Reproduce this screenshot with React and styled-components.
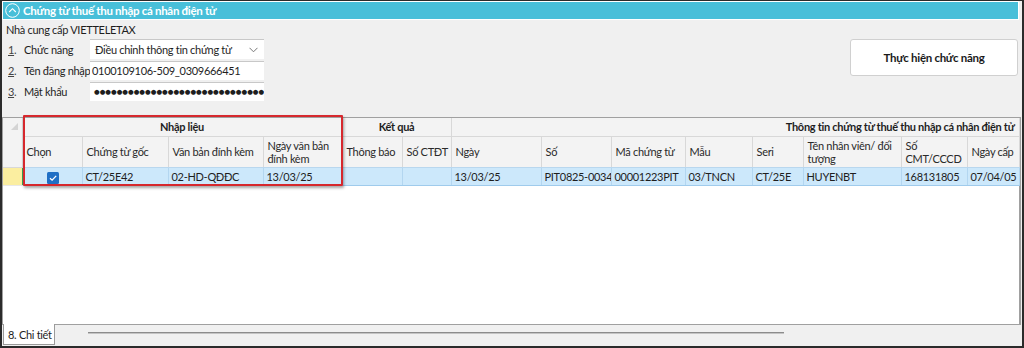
import React from "react";
import styled, { createGlobalStyle } from "styled-components";

const GlobalStyle = createGlobalStyle`
  html, body {
    margin: 0;
    padding: 0;
    background: #f0f0f0;
  }
  * {
    box-sizing: border-box;
  }
`;

const columns = [
  { key: "chon", title: "Chọn", width: 60 },
  { key: "goc", title: "Chứng từ gốc", width: 86 },
  { key: "vb", title: "Văn bản đính kèm", width: 95 },
  { key: "ngayvb", title: "Ngày văn bản đính kèm", width: 79 },
  { key: "tb", title: "Thông báo", width: 60 },
  { key: "ctdt", title: "Số CTĐT", width: 49 },
  { key: "ngay", title: "Ngày", width: 90 },
  { key: "so", title: "Số", width: 70 },
  { key: "ma", title: "Mã chứng từ", width: 74 },
  { key: "mau", title: "Mẫu", width: 67 },
  { key: "seri", title: "Seri", width: 51 },
  { key: "ten", title: "Tên nhân viên/ đối tượng", width: 98 },
  { key: "cmt", title: "Số CMT/CCCD", width: 66 },
  { key: "ngaycap", title: "Ngày cấp", width: 52 },
];

const row = {
  chon: true,
  goc: "CT/25E42",
  vb: "02-HD-QĐĐC",
  ngayvb: "13/03/25",
  tb: "",
  ctdt: "",
  ngay: "13/03/25",
  so: "PIT0825-0034",
  ma: "00001223PIT",
  mau: "03/TNCN",
  seri: "CT/25E",
  ten: "HUYENBT",
  cmt: "168131805",
  ngaycap: "07/04/05",
};

const fields = [
  { n: "1", label: "Chức năng", value: "Điều chỉnh thông tin chứng từ", select: true },
  { n: "2", label: "Tên đăng nhập", value: "0100109106-509_0309666451" },
  { n: "3", label: "Mật khẩu", value: "●".repeat(34), secret: true },
];

const CollapseIcon = () => (
  <svg width="15" height="15" viewBox="0 0 15 15">
    <circle cx="7.5" cy="7.5" r="6.8" fill="none" stroke="#fff" strokeWidth="1" />
    <path d="M4.2 9 L7.5 5.7 L10.8 9" fill="none" stroke="#fff" strokeWidth="1.1" />
  </svg>
);

const Chevron = () => (
  <svg width="9" height="6" viewBox="0 0 9 6">
    <path d="M0.5 0.8 L4.5 4.8 L8.5 0.8" fill="none" stroke="#777" strokeWidth="1" />
  </svg>
);

const Check = () => (
  <svg width="12" height="12" viewBox="0 0 12 12">
    <rect x="0" y="0" width="12" height="12" rx="1.5" fill="#1f6fc5" />
    <path d="M3 6.2 L5.1 8.2 L9.2 3.9" fill="none" stroke="#fff" strokeWidth="1.3" />
  </svg>
);

const App = () => {
  return (
    <Frame>
      <GlobalStyle />
      <TitleBar>
        <CollapseIcon />
        <span>Chứng từ thuế thu nhập cá nhân điện tử</span>
      </TitleBar>

      <TopPanel>
        <Form>
          <Provider>Nhà cung cấp VIETTELETAX</Provider>
          {fields.map((f) => (
            <FieldRow key={f.n}>
              <Label>
                <Num>
                  <u>{f.n}</u>.
                </Num>
                {f.label}
              </Label>
              <Input $select={f.select} $secret={f.secret}>
                <span>{f.value}</span>
                {f.select && <Chevron />}
              </Input>
            </FieldRow>
          ))}
        </Form>
        <ActionButton>Thực hiện chức năng</ActionButton>
      </TopPanel>

      <GridBox>
        <Table>
          <colgroup>
            <col style={{ width: 19 }} />
            {columns.map((c) => (
              <col key={c.key} style={{ width: c.width }} />
            ))}
          </colgroup>
          <thead>
            <tr>
              <Corner rowSpan={2}>
                <CornerMark />
              </Corner>
              <GroupCell colSpan={4}>Nhập liệu</GroupCell>
              <GroupCell colSpan={2}>Kết quả</GroupCell>
              <GroupCell colSpan={8} $right>
                Thông tin chứng từ thuế thu nhập cá nhân điện tử
              </GroupCell>
            </tr>
            <tr>
              {columns.map((c) => (
                <HeadCell key={c.key}>{c.title}</HeadCell>
              ))}
            </tr>
          </thead>
          <tbody>
            <tr>
              <Indicator />
              {columns.map((c) => (
                <DataCell key={c.key} $center={c.key === "chon"} $first={c.key === "chon"}>
                  {c.key === "chon" ? <Check /> : row[c.key]}
                </DataCell>
              ))}
            </tr>
          </tbody>
        </Table>
        <Highlight />
      </GridBox>

      <BottomBar>
        <Tab>8. Chi tiết</Tab>
        <ScrollLine />
      </BottomBar>
    </Frame>
  );
};

const Frame = styled.div`
  width: 1024px;
  height: 348px;
  display: flex;
  flex-direction: column;
  background: #f0f0f0;
  border: 2px solid #2b2b2b;
  border-top-width: 1px;
  font-family: Lato, "Noto Sans", sans-serif;
  font-size: 11px;
  letter-spacing: -0.3px;
  color: #1e1e1e;
  overflow: hidden;
`;

const TitleBar = styled.div`
  height: 19px;
  flex-shrink: 0;
  margin-right: 3px;
  display: flex;
  align-items: center;
  gap: 3px;
  padding-left: 2px;
  background: #48bfd9;
  border: 1px solid #fff;
  color: #fff;
  font-weight: 700;
  font-size: 11.5px;
`;

const TopPanel = styled.div`
  height: 97px;
  flex-shrink: 0;
  display: flex;
  justify-content: space-between;
  align-items: flex-start;
  padding: 1px 4px 0 4px;
`;

const Form = styled.div`
  display: flex;
  flex-direction: column;
  gap: 1px;
`;

const Provider = styled.div`
  height: 17px;
  line-height: 17px;
`;

const FieldRow = styled.div`
  display: flex;
  align-items: center;
  height: 20px;
`;

const Label = styled.div`
  width: 84px;
  padding-left: 2px;
  white-space: nowrap;
`;

const Num = styled.span`
  display: inline-block;
  width: 16px;
  color: #444;
`;

const Input = styled.div`
  width: 174px;
  height: ${(p) => (p.$select ? 20 : 19)}px;
  display: flex;
  align-items: center;
  justify-content: space-between;
  padding: 0 6px 0 ${(p) => (p.$select ? 5 : p.$secret ? 4 : 2)}px;
  background: #fff;
  border-top: 1px solid #c8c8c8;
  overflow: hidden;
  white-space: nowrap;
  span {
    font-family: ${(p) => (p.$secret ? '"DejaVu Sans", sans-serif' : "inherit")};
    font-size: ${(p) => (p.$secret ? 6.5 : 11)}px;
    letter-spacing: ${(p) => (p.$secret ? "0" : "-0.3px")};
  }
`;

const ActionButton = styled.button`
  margin-top: 18px;
  width: 168px;
  height: 37px;
  background: #fff;
  border: 1px solid #d0d0d0;
  border-radius: 3px;
  font-family: inherit;
  font-size: 11.5px;
  letter-spacing: -0.3px;
  font-weight: 700;
  color: #1a1a1a;
`;

const GridBox = styled.div`
  position: relative;
  height: 208px;
  flex-shrink: 0;
  margin-right: 1px;
  background: #fff;
  border: 1px solid #a0a0a0;
  border-right-width: 2px;
  overflow: visible;
`;

const Table = styled.table`
  table-layout: fixed;
  border-collapse: collapse;
  width: 1016px;
  font-size: 11px;
`;

const Corner = styled.th`
  padding: 0;
  background: #f3f3f3;
  border-right: 1px solid #d8d8d8;
  border-bottom: 1px solid #d8d8d8;
  vertical-align: top;
`;

const CornerMark = styled.div`
  width: 0;
  height: 0;
  margin: 5px 0 0 8px;
  border-left: 7px solid transparent;
  border-bottom: 7px solid #d4d4d4;
`;

const GroupCell = styled.th`
  height: 18px;
  padding: 0 4px;
  background: #f3f3f3;
  border-right: 1px solid #d8d8d8;
  border-bottom: 1px solid #d8d8d8;
  text-align: ${(p) => (p.$right ? "right" : "center")};
  font-weight: 700;
  white-space: nowrap;
  overflow: hidden;
`;

const HeadCell = styled.th`
  height: 31px;
  padding: 0 2px 0 4px;
  background: #f3f3f3;
  border-right: 1px solid #d8d8d8;
  border-bottom: 1px solid #b9d7ee;
  text-align: left;
  font-weight: 400;
  line-height: 13px;
  color: #2a2a2a;
  overflow: hidden;
`;

const Indicator = styled.td`
  height: 18px;
  padding: 0;
  background: #fbeea0;
  border-bottom: 1px solid #e8e8e8;
`;

const DataCell = styled.td`
  height: 18px;
  padding: 0 2px 0 3px;
  background: #cce8fb;
  border-right: 1px solid #b3d6f0;
  border-bottom: 1px solid #9fcbec;
  border-left: ${(p) => (p.$first ? "1px solid #3aa35a" : "none")};
  text-align: ${(p) => (p.$center ? "center" : "left")};
  white-space: nowrap;
  overflow: hidden;
  line-height: 17px;
  & > svg {
    vertical-align: middle;
  }
`;

const Highlight = styled.div`
  position: absolute;
  left: 20px;
  top: -3px;
  width: 320px;
  height: 71px;
  border: 2px solid #d6282d;
  border-radius: 1px;
  box-shadow: 1px 2px 3px rgba(0, 0, 0, 0.35);
  pointer-events: none;
`;

const BottomBar = styled.div`
  flex: 1;
  display: flex;
  align-items: flex-start;
`;

const Tab = styled.div`
  position: relative;
  margin-top: -1px;
  margin-left: 1px;
  width: 52px;
  height: 21px;
  padding-left: 4px;
  display: flex;
  align-items: center;
  background: #fff;
  border: 1px solid #9a9a9a;
  border-top: none;
  white-space: nowrap;
`;

const ScrollLine = styled.div`
  margin: 7px 0 0 33px;
  width: 696px;
  height: 2px;
  background: #8c8c8c;
  border-bottom: 1px solid #c4c4c4;
`;

export default App;
